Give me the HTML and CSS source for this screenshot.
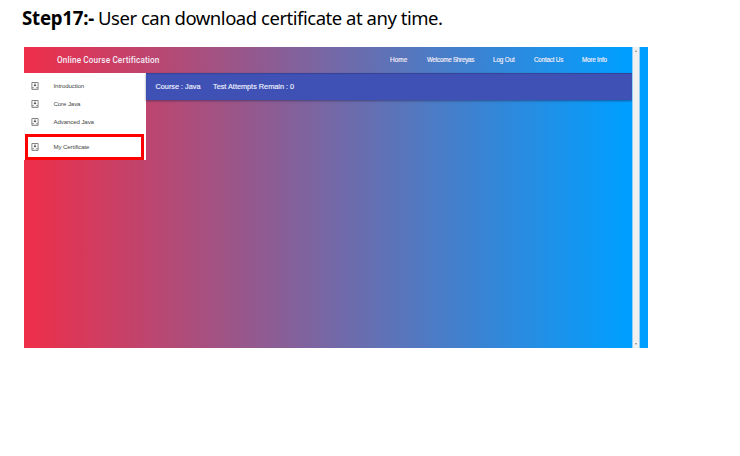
FILE: index.html
```html
<!DOCTYPE html>
<html lang="en">
<head>
<meta charset="utf-8">
<title>Online Course Certification</title>
<link rel="stylesheet" href="styles.css">
</head>
<body>
<svg class="defs" aria-hidden="true">
  <symbol id="inbox" viewBox="0 0 8 8">
    <path d="M.9.5h6.200v6.900H.9z" fill="none" stroke="#777" stroke-width=".9"/>
    <path d="M1 5.300h1.800Q3 6.300 4 6.300T5.200 5.300H7V6.300H1z" fill="#888"/>
    <path d="M3.500 1.600h1v1.400h1L4 4.600 2.500 3h1z" fill="#444"/>
  </symbol>
</svg>
<h1 class="step"><strong class="step-no">Step17:-</strong><span class="step-text">User can download certificate at any time.</span></h1>
<div class="window">
  <div class="page">
    <header class="topbar">
      <div class="brand">Online Course Certification</div>
      <nav class="links">
        <a class="home">Home</a>
        <a class="welcome">Welcome Shreyas</a>
        <a class="logout">Log Out</a>
        <a class="contact">Contact Us</a>
        <a class="more">More Info</a>
      </nav>
    </header>
    <div class="content">
      <aside class="sidebar">
        <div class="item"><svg class="icon"><use href="#inbox"/></svg><span>Introduction</span></div>
        <div class="item"><svg class="icon"><use href="#inbox"/></svg><span>Core Java</span></div>
        <div class="item"><svg class="icon"><use href="#inbox"/></svg><span>Advanced Java</span></div>
        <div class="item selected"><svg class="icon"><use href="#inbox"/></svg><span>My Certificate</span></div>
      </aside>
      <div class="coursebar"><span class="course">Course : Java</span><span class="attempts">Test Attempts Remain : 0</span></div>
    </div>
  </div>
  <div class="scrollbar"><i class="up"></i><i class="down"></i></div>
</div>
</body>
</html>
```
FILE: styles.css
```css
* { box-sizing: border-box; }
body {
  margin: 0;
  width: 740px;
  height: 456px;
  overflow: hidden;
  background: #fff;
  font-family: "Liberation Sans", Roboto, sans-serif;
}
.defs { display: none; }
.step {
  display: flex;
  align-items: center;
  height: 47px;
  margin: 0;
  padding: 0 0 12px 22px;
  font: 400 18.5px/35px "Noto Sans", "Open Sans", sans-serif;
  color: #000;
  white-space: nowrap;
}
.step-no { width: 76px; font-size: 18.7px; letter-spacing: -0.25px; }
.step-text { letter-spacing: -0.47px; }
.window {
  display: flex;
  width: 624px;
  height: 301px;
  margin-left: 24px;
  padding-right: 8px;
  background: #009fff;
}
.page {
  width: 608px;
  background: linear-gradient(to right, #f02f49 0, #ec2f4b 1%, #009fff 99%);
}
.topbar {
  display: flex;
  align-items: center;
  height: 26px;
  padding-left: 33px;
  color: #f4edf7;
  white-space: nowrap;
}
.brand { width: 333px; font: 500 8.2px Roboto, sans-serif; letter-spacing: .14px; }
.links { display: flex; padding-bottom: 2px; font-size: 6.3px; -webkit-text-stroke: .15px; }
.home { width: 37px; font-size: 6.5px; }
.welcome { width: 66px; letter-spacing: -.25px; }
.logout { width: 41px; letter-spacing: -.1px; }
.contact { width: 48px; letter-spacing: -.2px; }
.more { letter-spacing: -.2px; }
.content { display: flex; align-items: flex-start; }
.sidebar { width: 122px; height: 87px; padding: 4px 2px 0 1px; background: #fff; }
.item {
  display: flex;
  align-items: center;
  height: 18px;
  padding-left: 6px;
  font-size: 6.1px;
  letter-spacing: -.1px;
  color: #444;
}
.item span { padding-bottom: 2px; }
.icon { width: 8px; height: 8px; margin-right: 14.500px; }
.item.selected {
  height: 26px;
  margin-top: 3px;
  padding-left: 3px;
  border: 3px solid #f00;
}
.coursebar {
  display: flex;
  align-items: center;
  width: 486px;
  height: 27px;
  padding-left: 9.500px;
  background: #3f51b5;
  box-shadow: 0 1px 2px rgba(35, 35, 80, .55), inset 0 1px 1px rgba(35, 35, 80, .3);
  color: #eef0ff;
  font-size: 7.3px;
  -webkit-text-stroke: .15px;
}
.course { width: 57.5px; }
.scrollbar {
  display: flex;
  flex-direction: column;
  justify-content: space-between;
  align-items: center;
  width: 8px;
  padding: 3px 0;
  background: #f0f0f0;
  border: solid #8fd0f5;
  border-width: 0 1px;
}
.up, .down { border: 1.5px solid transparent; }
.up { border-top: 0; border-bottom: 2px solid #888; }
.down { border-bottom: 0; border-top: 2px solid #888; }
```
